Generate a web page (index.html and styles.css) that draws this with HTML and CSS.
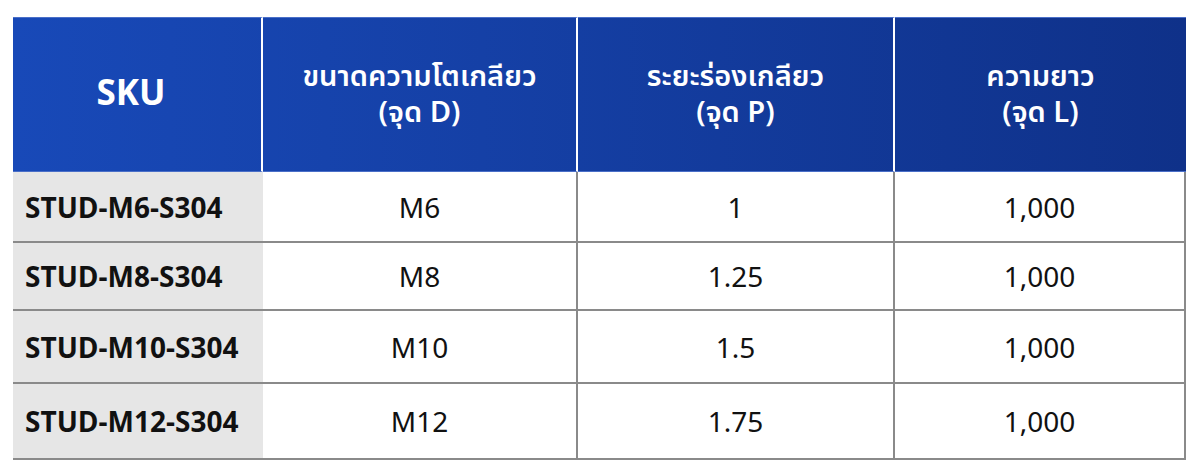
FILE: index.html
```html
<!DOCTYPE html>
<html lang="th">
<head>
<meta charset="utf-8">
<title>STUD S304</title>
<link rel="stylesheet" href="styles.css">
</head>
<body>
<div class="wrap">
  <table class="spec">
    <colgroup>
      <col class="c1"><col class="c2"><col class="c3"><col class="c4">
    </colgroup>
    <thead>
      <tr>
        <th class="sku-h">SKU</th>
        <th>ขนาดความโตเกลียว<br>(จุด D)</th>
        <th>ระยะร่องเกลียว<br>(จุด P)</th>
        <th>ความยาว<br>(จุด L)</th>
      </tr>
    </thead>
    <tbody>
      <tr><td>STUD-M6-S304</td><td>M6</td><td>1</td><td>1,000</td></tr>
      <tr><td>STUD-M8-S304</td><td>M8</td><td>1.25</td><td>1,000</td></tr>
      <tr><td>STUD-M10-S304</td><td>M10</td><td>1.5</td><td>1,000</td></tr>
      <tr><td>STUD-M12-S304</td><td>M12</td><td>1.75</td><td>1,000</td></tr>
    </tbody>
  </table>
</div>
</body>
</html>
```
FILE: styles.css
```css
html, body {
  margin: 0;
  padding: 0;
  background: #ffffff;
}
body {
  font-family: "Noto Sans Thai", "Noto Sans Thai Looped", "Liberation Sans", "Noto Sans", sans-serif;
  color: #111111;
}
.wrap {
  padding: 17px 14px 0 13px;
}
.spec {
  width: 1173px;
  table-layout: fixed;
  border-collapse: separate;
  border-spacing: 0;
}
.c1 { width: 250px; }
.c2 { width: 315px; }
.c3 { width: 317px; }
.c4 { width: 291px; }
.spec th, .spec td {
  box-sizing: border-box;
  padding: 0;
}
.spec thead tr {
  background: linear-gradient(90deg, #1849b8 0%, #1540a6 40%, #0f3189 100%);
}
.spec th {
  height: 155px;
  color: #ffffff;
  font-weight: 600;
  font-size: 29px;
  line-height: 36px;
  text-align: center;
  vertical-align: middle;
  border-right: 2px solid #ffffff;
  border-top: 1px solid #4a6fc8;
  border-bottom: 1px solid #4a6fc8;
}
.spec th:last-child {
  border-right: 0;
}
.spec th.sku-h {
  font-size: 35px;
  font-weight: 700;
  padding-right: 12px;
}
.spec td {
  font-size: 28px;
  text-align: center;
  vertical-align: middle;
  padding-top: 5px;
  border-bottom: 2px solid #8a8a8a;
}
.spec td:first-child {
  background: #e6e6e6;
  font-weight: 700;
  text-align: left;
  padding-left: 12px;
}
.spec td:nth-child(n+2) {
  border-right: 2px solid #8a8a8a;
}
.spec tbody tr:nth-child(1) td { height: 71px; }
.spec tbody tr:nth-child(2) td { height: 68px; }
.spec tbody tr:nth-child(3) td { height: 73px; }
.spec tbody tr:nth-child(4) td { height: 76px; }
```
